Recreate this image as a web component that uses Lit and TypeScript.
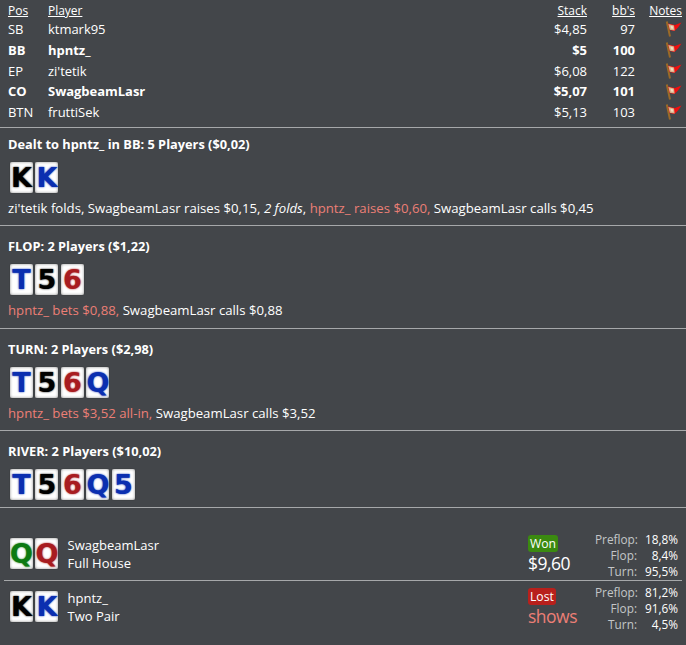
import { LitElement, html, css } from "lit";
import { customElement } from "lit/decorators.js";

type C = [string, string];
const B = "#0b2fb0", K = "#000", R = "#a81c20", G = "#0c7a12";
const flag = html`<svg class="flag" width="17" height="16" viewBox="0 0 17 16">
  <path d="M1.8 0.5 L5 15.5" stroke="#9a6a28" stroke-width="2" fill="none"/>
  <path d="M3 2.5 L10 4 L16.5 1.5 L13 6.5 L9.5 10 L4.5 9 Z" fill="#f01010"/>
  <path d="M3.4 3 L9 4.4 L9.6 9.6 L4.8 8.8 Z" fill="#dcb48c"/>
  <path d="M5.6 4.8 L8 5.4 L8.2 7.8 L6 7.4 Z" fill="#f0dcc4"/>
</svg>`;
const players = [
  ["SB", "ktmark95", "$4,85", "97", 0],
  ["BB", "hpntz_", "$5", "100", 1],
  ["EP", "zi'tetik", "$6,08", "122", 0],
  ["CO", "SwagbeamLasr", "$5,07", "101", 1],
  ["BTN", "fruttiSek", "$5,13", "103", 0],
] as const;
const card = ([r, c]: C) => html`<span class="card" style="color:${c}">${r}</span>`;
const cards = (l: C[]) => html`<div class="cards">${l.map(card)}</div>`;
const T: C = ["T", B], F5: C = ["5", K], S6: C = ["6", R], Q: C = ["Q", B], B5: C = ["5", B];
const KK: C[] = [["K", K], ["K", B]];

@customElement("app-root")
export class AppRoot extends LitElement {
  static styles = css`
    :host { display: block; width: 686px; height: 645px; overflow: hidden; background: #43464a; color: #fff;
      font-family: "Open Sans", sans-serif; font-size: 13px; box-sizing: border-box; }
    .table { display: grid; grid-template-columns: 40px 1fr 60px 48px 47px; grid-template-rows: 18px repeat(5, 20.75px);
      padding: 1px 4px 0 8px; height: 127px; box-sizing: border-box; align-content: start; }
    .cell { line-height: 20.75px; white-space: nowrap; letter-spacing: -0.03px; }
    .hd { text-decoration: underline; font-size: 12px; line-height: 20px; height: 18px; }
    .r { text-align: right; }
    .b { font-weight: 700; }
    .fl { display: flex; justify-content: flex-end; align-items: center; }
    .flag { display: block; }
    hr { border: 0; height: 1px; background: #a6a8aa; margin: 0; }
    hr.m { margin-left: 4px; margin-right: 4px; }
    .sec { height: 102px; padding: 10px 8px 0; box-sizing: border-box; }
    .sec.first { height: 97px; padding-top: 6px; }
    .sec.turn { height: 101px; }
    .sec.river { height: 76px; }
    .title { font-weight: 700; line-height: 20px; height: 20px; font-size: 12.8px; }
    .cards { display: flex; gap: 2.5px; height: 32px; margin-top: 8px; padding-left: 1.5px; }
    .card { width: 23px; height: 31px; box-sizing: border-box; background: #fff;
      border-radius: 2px; box-shadow: inset 0 0 3px #8a8a8a, 0 0 1px #222; text-align: center;
      font: 700 27px/32px "DejaVu Sans", sans-serif; text-shadow: 0 0 2px currentColor; overflow: hidden; letter-spacing: -1px; }
    .act { line-height: 20px; margin-top: 4px; white-space: nowrap; font-size: 13.2px; }
    .hero { color: #ec7f76; }
    .show { display: flex; align-items: center; padding: 0 8px 0 8px; box-sizing: border-box; }
    .show.s1 { height: 72px; padding-top: 20px; }
    .show.s2 { height: 64px; padding-bottom: 12px; }
    .show .cards { margin-top: 0; }
    .name { margin-left: 9.5px; line-height: 18px; flex: 1; }
    .res { width: 67px; }
    .badge { display: inline-block; border-radius: 3px; color: #fff; font-size: 12.2px; line-height: 17px; padding: 0 2px; }
    .won { background: #3b8a10; }
    .lost { background: #b8201c; }
    .amt { font-size: 17.5px; line-height: 23px; letter-spacing: -0.5px; }
    .stats { display: grid; grid-template-columns: 42px 41px; line-height: 16px; font-size: 11.8px; text-align: right; margin-top: 2px; }
    .lbl { color: #c4c6c8; }
  `;
  private stats(a: string, b: string, c: string) {
    return html`<div class="stats">
      <span class="lbl">Preflop:</span><span>${a}</span>
      <span class="lbl">Flop:</span><span>${b}</span>
      <span class="lbl">Turn:</span><span>${c}</span></div>`;
  }
  render() {
    return html`
      <div class="table">
        <div class="cell hd">Pos</div><div class="cell hd">Player</div><div class="cell hd r">Stack</div><div class="cell hd r">bb's</div><div class="cell hd r">Notes</div>
        ${players.map(([p, n, s, bb, bold]) => {
          const c = bold ? "cell b" : "cell";
          return html`<div class=${c}>${p}</div><div class=${c}>${n}</div><div class="${c} r">${s}</div><div class="${c} r">${bb}</div><div class="cell fl">${flag}</div>`;
        })}
      </div>
      <hr />
      <div class="sec first">
        <div class="title">Dealt to hpntz_ in BB: 5 Players ($0,02)</div>
        ${cards(KK)}
        <div class="act">zi'tetik folds, SwagbeamLasr raises $0,15, <i>2 folds</i>, <span class="hero">hpntz_ raises $0,60,</span> SwagbeamLasr calls $0,45</div>
      </div>
      <hr />
      <div class="sec">
        <div class="title">FLOP: 2 Players ($1,22)</div>
        ${cards([T, F5, S6])}
        <div class="act"><span class="hero">hpntz_ bets $0,88,</span> SwagbeamLasr calls $0,88</div>
      </div>
      <hr />
      <div class="sec turn">
        <div class="title">TURN: 2 Players ($2,98)</div>
        ${cards([T, F5, S6, Q])}
        <div class="act"><span class="hero">hpntz_ bets $3,52 all-in,</span> SwagbeamLasr calls $3,52</div>
      </div>
      <hr />
      <div class="sec river">
        <div class="title">RIVER: 2 Players ($10,02)</div>
        ${cards([T, F5, S6, Q, B5])}
      </div>
      <hr />
      <div class="show s1">
        ${cards([["Q", G], ["Q", R]])}
        <div class="name">SwagbeamLasr<br />Full House</div>
        <div class="res"><span class="badge won">Won</span><div class="amt">$9,60</div></div>
        ${this.stats("18,8%", "8,4%", "95,5%")}
      </div>
      <hr class="m" />
      <div class="show s2">
        ${cards(KK)}
        <div class="name">hpntz_<br />Two Pair</div>
        <div class="res"><span class="badge lost">Lost</span><div class="amt hero">shows</div></div>
        ${this.stats("81,2%", "91,6%", "4,5%")}
      </div>
    `;
  }
}
